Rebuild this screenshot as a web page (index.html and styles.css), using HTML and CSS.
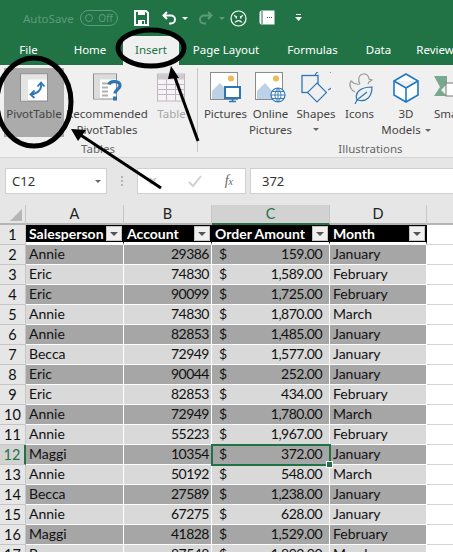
FILE: index.html
```html
<!DOCTYPE html>
<html lang="en">

<head>
  <meta name="viewport" content="width=device-width">
  <title>Insert PivotTable</title>
  <link rel="stylesheet" href="styles.css">
</head>

<body>
  <div class="titlebar">
    <span class="autosave">AutoSave</span>
    <span class="toggle"><i></i>Off</span>
    <svg class="qa qa-save" width="15" height="16" viewBox="0 0 15 16"><path d="M1 1h11l2 2v12H1z" fill="none" stroke="#fff" stroke-width="2"/><path d="M4 1h7v4H4zM4 10h7v5H4z" fill="#fff"/><path d="M8 11h2v3H8z" fill="#217346"/></svg>
    <svg class="qa qa-undo" width="15" height="14" viewBox="0 0 15 14"><path d="M5 1 1.500 4.500 5 8M2 4.500h7a4 4 0 0 1 0 8H7" fill="none" stroke="#fff" stroke-width="2"/></svg>
    <span class="caret qa-c1"></span>
    <svg class="qa qa-redo" width="15" height="14" viewBox="0 0 15 14"><path d="M10 1l3.500 3.500L10 8M13 4.500H6a4 4 0 0 0 0 8h2" fill="none" stroke="#5c9b7b" stroke-width="2"/></svg>
    <span class="caret dim qa-c2"></span>
    <svg class="qa qa-face" width="17" height="17" viewBox="0 0 17 17"><circle cx="8.500" cy="8.500" r="7.500" fill="none" stroke="#fff" stroke-width="1.200"/><path d="M4 5.500l3 1.500M13 5.500l-3 1.500M5 12.500c2-2.500 5-2.500 7 0" fill="none" stroke="#fff" stroke-width="1.200"/><path d="M5.500 7h1.500v1.500H5.500zM10 7h1.500v1.500H10z" fill="#fff"/></svg>
    <svg class="qa qa-book" width="16" height="17" viewBox="0 0 16 17"><path d="M3 .5h12.500v14H3A2.500 2.500 0 0 1 .5 12V3A2.500 2.500 0 0 1 3 .5z" fill="#fff"/><path d="M3 1v13" stroke="#217346"/><path d="M8 7h1v1H8zM10 7h1v1h-1zM12 7h1v1h-1z" fill="#217346"/></svg>
    <svg class="qa qa-more" width="7" height="8" viewBox="0 0 7 8"><path d="M1 .5h5" stroke="#fff"/><path d="M0 3h7L3.500 7z" fill="#fff"/></svg>
  </div>

  <nav class="tabs">
    <span class="tab tab-file">File</span>
    <span class="tab tab-home">Home</span>
    <span class="tab tab-insert">Insert</span>
    <span class="tab tab-layout">Page Layout</span>
    <span class="tab tab-formulas">Formulas</span>
    <span class="tab tab-data">Data</span>
    <span class="tab tab-review">Review</span>
  </nav>

  <section class="ribbon">
    <div class="group group-tables">
      <div class="items">
        <div class="btn btn-pivot active">
          <svg width="29" height="29" viewBox="0 0 29 29"><rect x=".5" y=".5" width="27" height="27" fill="#fff" stroke="#8c8c8c"/><path d="M1 1h26v5H1zM1 6h7v21H1z" fill="#e4e4e4"/><path d="M21 10c1 6-3 10-10 11" fill="none" stroke="#2e75b6" stroke-width="2"/><path d="M17.500 13l3.500-4 3.500 4M14.500 17l-4 4 4 3.500" fill="none" stroke="#2e75b6" stroke-width="1.800"/></svg>
          <span>PivotTable</span>
        </div>
        <div class="btn btn-recommended">
          <svg width="29" height="29" viewBox="0 0 29 29"><rect x=".5" y=".5" width="23" height="25" fill="#fff" stroke="#8c8c8c"/><path d="M1 1h22v5H1zM1 6h6v19H1z" fill="#dcdcdc"/><path d="M9 10h9M9 14h6M9 18h6M9 22h6" stroke="#b0b0b0" stroke-width="2"/><path d="M16 11c1-4 11-4 11 1 0 4-5 4-5 8" fill="none" stroke="#2e75b6" stroke-width="3.200"/><rect x="20" y="23" width="4" height="4" fill="#2e75b6"/></svg>
          <span>Recommended<br>PivotTables</span>
        </div>
        <div class="btn btn-table disabled">
          <svg width="29" height="29" viewBox="0 0 29 29"><rect x=".5" y=".5" width="27" height="27" fill="#f6f2f6" stroke="#bdb8bd"/><rect x="1" y="1" width="26" height="5" fill="#cfcacf"/><path d="M1 11h26M1 16h26M1 21h26M9.500 6v21M18.500 6v21" stroke="#bdb8bd"/></svg>
          <span>Table</span>
        </div>
      </div>
      <div class="label">Tables</div>
    </div>

    <div class="group group-illustrations">
      <div class="items">
        <div class="btn btn-pictures">
          <svg width="32" height="32" viewBox="0 0 32 32"><rect x=".5" y=".5" width="27" height="27" fill="#fff" stroke="#8c8c8c"/><circle cx="21" cy="6.500" r="3" fill="#f0b955"/><path d="M2 27V19l8-8 8 9v7z" fill="#bcd0e6"/><rect x="15" y="15" width="15" height="11" fill="#fff" stroke="#2e75b6" stroke-width="2"/><path d="M22.500 26v3M19 29.500h7" stroke="#2e75b6" stroke-width="1.500"/></svg>
          <span>Pictures</span>
        </div>
        <div class="btn btn-online">
          <svg width="32" height="32" viewBox="0 0 32 32"><rect x=".5" y=".5" width="27" height="27" fill="#fff" stroke="#8c8c8c"/><circle cx="21" cy="6.500" r="3" fill="#f0b955"/><path d="M2 27V19l8-8 8 9v7z" fill="#bcd0e6"/><circle cx="23" cy="23" r="7" fill="#fff" stroke="#2e75b6" stroke-width="1.200"/><path d="M16 23h14M17 19.500h12M17 26.500h12M23 16v14M23 16c-4 4-4 10 0 14M23 16c4 4 4 10 0 14" fill="none" stroke="#2e75b6" stroke-width=".9"/></svg>
          <span>Online<br>Pictures</span>
        </div>
        <div class="btn btn-shapes">
          <svg width="30" height="32" viewBox="0 0 30 32"><path d="M14 3a10.500 10.500 0 1 1 13 15" fill="none" stroke="#2e75b6" stroke-width="1.100"/><rect x="1" y="3.500" width="16" height="17" fill="none" stroke="#2e75b6" stroke-width="1.300"/><path d="M16 11l9.500 9.500-9.500 9.500-9.500-9.500z" fill="#f0f0f0" stroke="#2e75b6" stroke-width="1.100"/></svg>
          <span>Shapes</span>
          <i class="caret gray"></i>
        </div>
        <div class="btn btn-icons">
          <svg width="30" height="32" viewBox="0 0 30 32"><path d="M15 12c-4 1-6 0-9-3-3 5 1 10 4 11M15 12c-2-3-2-9 3-10 4-1 6 3 6 5l3 1-3 2-1 2" fill="none" stroke="#9b9b9b" stroke-width="1.200"/><path d="M10 32l2-4M12 28c-3-8 4-13 15-13 0 9-5 16-15 13zM12 28l10-8" fill="none" stroke="#2e75b6" stroke-width="1.200"/></svg>
          <span>Icons</span>
        </div>
        <div class="btn btn-models">
          <svg width="30" height="32" viewBox="0 0 30 32"><path d="M15 2l12 7v14l-12 7-12-7V9zM3 9l12 7 12-7M15 16v14" fill="#fff" stroke="#1f78c8" stroke-width="1.600"/></svg>
          <span>3D<br>Models <i class="caret gray inline"></i></span>
        </div>
        <div class="btn btn-smart">
          <svg width="26" height="32" viewBox="0 0 26 32"><path d="M0 4h13v8l-6 6 6 6H0l6-9z" fill="#79a890"/><rect x="12" y="11" width="14" height="13" fill="#fff" stroke="#777"/></svg>
          <span>Sma</span>
        </div>
      </div>
      <div class="label">Illustrations</div>
    </div>
  </section>

  <div class="formulabar">
    <div class="namebox">C12<i class="caret gray"></i></div>
    <div class="grip"></div>
    <div class="fxbox">
      <svg width="16" height="14" viewBox="0 0 16 14"><path d="M1 1l6 6M7 1L1 7" stroke="#d0d0d0" stroke-width="2" transform="translate(0 3)"/></svg>
      <svg width="16" height="14" viewBox="0 0 16 14"><path d="M2 8l4 4 8-10" fill="none" stroke="#d0d0d0" stroke-width="2"/></svg>
      <span class="fx">f<small>x</small></span>
    </div>
    <div class="input">372</div>
  </div>

  <table class="sheet">
    <colgroup>
      <col class="c-row"><col class="c-a"><col class="c-b"><col class="c-c"><col class="c-d"><col class="c-e">
    </colgroup>
    <tr class="heads">
      <th class="corner"><span></span></th><th>A</th><th>B</th><th class="current">C</th><th>D</th><th class="rest"></th>
    </tr>
    <tr class="titles">
      <th>1</th>
      <td>Salesperson<i class="filter"></i></td>
      <td>Account<i class="filter"></i></td>
      <td>Order Amount<i class="filter"></i></td>
      <td>Month<i class="filter"></i></td>
      <td class="rest"></td>
    </tr>
    <tr class="dark"><th>2</th><td>Annie</td><td class="num">29386</td><td class="money"><b>$</b>159.00</td><td>January</td><td class="rest"></td></tr>
    <tr class="light"><th>3</th><td>Eric</td><td class="num">74830</td><td class="money"><b>$</b>1,589.00</td><td>February</td><td class="rest"></td></tr>
    <tr class="dark"><th>4</th><td>Eric</td><td class="num">90099</td><td class="money"><b>$</b>1,725.00</td><td>February</td><td class="rest"></td></tr>
    <tr class="light"><th>5</th><td>Annie</td><td class="num">74830</td><td class="money"><b>$</b>1,870.00</td><td>March</td><td class="rest"></td></tr>
    <tr class="dark"><th>6</th><td>Annie</td><td class="num">82853</td><td class="money"><b>$</b>1,485.00</td><td>January</td><td class="rest"></td></tr>
    <tr class="light"><th>7</th><td>Becca</td><td class="num">72949</td><td class="money"><b>$</b>1,577.00</td><td>January</td><td class="rest"></td></tr>
    <tr class="dark"><th>8</th><td>Eric</td><td class="num">90044</td><td class="money"><b>$</b>252.00</td><td>January</td><td class="rest"></td></tr>
    <tr class="light"><th>9</th><td>Eric</td><td class="num">82853</td><td class="money"><b>$</b>434.00</td><td>February</td><td class="rest"></td></tr>
    <tr class="dark"><th>10</th><td>Annie</td><td class="num">72949</td><td class="money"><b>$</b>1,780.00</td><td>March</td><td class="rest"></td></tr>
    <tr class="light"><th>11</th><td>Annie</td><td class="num">55223</td><td class="money"><b>$</b>1,967.00</td><td>February</td><td class="rest"></td></tr>
    <tr class="dark"><th class="current">12</th><td>Maggi</td><td class="num">10354</td><td class="money selected"><b>$</b>372.00<i class="handle"></i></td><td>January</td><td class="rest"></td></tr>
    <tr class="light"><th>13</th><td>Annie</td><td class="num">50192</td><td class="money"><b>$</b>548.00</td><td>March</td><td class="rest"></td></tr>
    <tr class="dark"><th>14</th><td>Becca</td><td class="num">27589</td><td class="money"><b>$</b>1,238.00</td><td>January</td><td class="rest"></td></tr>
    <tr class="light"><th>15</th><td>Annie</td><td class="num">67275</td><td class="money"><b>$</b>628.00</td><td>January</td><td class="rest"></td></tr>
    <tr class="dark"><th>16</th><td>Maggi</td><td class="num">41828</td><td class="money"><b>$</b>1,529.00</td><td>February</td><td class="rest"></td></tr>
    <tr class="light"><th>17</th><td>Becca</td><td class="num">87548</td><td class="money"><b>$</b>1,892.00</td><td>March</td><td class="rest"></td></tr>
  </table>

  <!-- hand drawn marks on top of the screenshot -->
  <svg class="marks" width="453" height="552" viewBox="0 0 453 552">
    <g fill="none" stroke="#000">
      <ellipse cx="151" cy="48" rx="33" ry="18" stroke-width="5"/>
      <ellipse cx="34" cy="102" rx="37" ry="44" stroke-width="5"/>
      <path d="M198 141 173 72" stroke-width="3"/>
      <path d="M161 188 76 132" stroke-width="3"/>
    </g>
    <path d="M171 66l8 12-11 1z" fill="#000"/>
    <path d="M71 129l15 1-8 11z" fill="#000"/>
  </svg>
</body>

</html>
```

FILE: styles.css
```css
html, body {
  margin: 0;
  padding: 0;
}

body {
  width: 453px;
  height: 552px;
  overflow: hidden;
  position: relative;
  background: #fff;
  font-family: "Noto Sans", sans-serif;
  font-size: 12px;
  color: #444;
}

.titlebar {
  display: flex;
  align-items: center;
  height: 36px;
  padding-left: 23px;
  background: #217346;
}

.autosave {
  width: 57px;
  color: #5c9b7b;
  font-size: 11.500px;
}

.toggle {
  display: flex;
  align-items: center;
  justify-content: space-between;
  box-sizing: border-box;
  width: 38px;
  height: 16px;
  padding: 0 4px;
  border: 1px solid #5c9b7b;
  border-radius: 8px;
  color: #5c9b7b;
  font-size: 10px;
}

.toggle i {
  width: 6px;
  height: 6px;
  border: 1px solid #5c9b7b;
  border-radius: 50%;
}

.qa { flex: none; }
.qa-save { margin-left: 16px; }
.qa-undo { margin-left: 13px; }
.qa-c1 { margin-left: 5px; }
.qa-redo { margin-left: 10px; }
.qa-c2 { margin-left: 6px; }
.qa-face { margin-left: 5px; }
.qa-book { margin-left: 12px; }
.qa-more { margin-left: 20px; }

.caret {
  display: inline-block;
  width: 0;
  height: 0;
  border-left: 3px solid transparent;
  border-right: 3px solid transparent;
  border-top: 3px solid #fff;
}

.caret.dim { border-top-color: #5c9b7b; }
.caret.gray { border-top-color: #666; }
.caret.inline { vertical-align: middle; margin-left: 1px; }

.tabs {
  display: flex;
  height: 29px;
  background: #217346;
  overflow: hidden;
}

.tab {
  flex: none;
  height: 29px;
  line-height: 28px;
  text-align: center;
  color: #fff;
  font-size: 11.500px;
  white-space: nowrap;
}

.tab-file { width: 57px; }
.tab-home { width: 66px; }
.tab-insert { width: 56px; color: #217346; background: #f0f0f0; }
.tab-layout { width: 94px; }
.tab-formulas { width: 79px; }
.tab-data { width: 53px; }
.tab-review { width: 60px; }

.ribbon {
  display: flex;
  box-sizing: border-box;
  height: 93px;
  padding-top: 3px;
  background: #f0f0f0;
  border-bottom: 1px solid #d4d4d4;
}

.group {
  display: flex;
  flex-direction: column;
  flex: none;
}

.group-tables {
  width: 198px;
  padding-left: 4px;
  box-sizing: border-box;
  background: linear-gradient(#c6c6c6, #c6c6c6) right top / 1px 84px no-repeat;
}

.group-illustrations {
  padding-left: 6px;
  width: 255px;
  box-sizing: border-box;
}

.items {
  display: flex;
  height: 73px;
}

.btn {
  flex: none;
  display: flex;
  flex-direction: column;
  align-items: center;
  box-sizing: border-box;
  padding-top: 4px;
  height: 69px;
  line-height: 16px;
  text-align: center;
  white-space: nowrap;
  font-size: 11.500px;
}

.btn svg {
  flex: none;
  height: 32px;
  margin-bottom: 2px;
}

.btn .caret.gray { margin-top: 6px; }
.btn .caret.inline { margin-top: 0; }

.btn-pivot { width: 60px; }
.btn-recommended { width: 86px; }
.btn-table { width: 43px; }
.btn-pictures { width: 43px; }
.btn-online { width: 47px; }
.btn-shapes { width: 44px; }
.btn-icons { width: 43px; }
.btn-models { width: 50px; }
.btn-smart { width: 30px; align-items: flex-start; padding-left: 3px; }

.active { background: #ababab; }
.disabled { color: #a6a6a6; }

.label {
  text-align: center;
  color: #666;
  font-size: 11.500px;
  line-height: 16px;
}

.group-tables .label { padding-right: 6px; }
.group-illustrations .label { padding-left: 84px; }

.formulabar {
  display: flex;
  box-sizing: border-box;
  height: 47px;
  padding: 10px 0 0 5px;
  background: #e6e6e6;
  font-size: 13px;
}

.namebox,
.fxbox,
.input {
  display: flex;
  align-items: center;
  box-sizing: border-box;
  height: 26px;
  background: #fff;
  border: 1px solid #d0d0d0;
}

.namebox {
  justify-content: space-between;
  width: 102px;
  padding: 0 5px 0 6px;
  color: #333;
}

.grip {
  width: 2px;
  height: 10px;
  margin: 8px 14px 0 14px;
  border-left: 2px dotted #b5b5b5;
  box-sizing: border-box;
}

.fxbox {
  justify-content: space-between;
  width: 109px;
  padding: 0 12px 0 11px;
}

.fx {
  font-family: "Liberation Serif", serif;
  font-style: italic;
  font-size: 14px;
  color: #666;
}

.fx small { font-size: 10px; }

.input {
  flex: 1;
  margin-left: 4px;
  padding-left: 11px;
  border-right: none;
  color: #333;
}

.sheet {
  table-layout: fixed;
  border-collapse: separate;
  border-spacing: 0;
  width: 453px;
  font-family: Lato, sans-serif;
  font-size: 14px;
  color: #111;
}

.c-row { width: 26px; }
.c-a { width: 98px; }
.c-b { width: 88px; }
.c-c { width: 118px; }
.c-d { width: 97px; }

.sheet tr { height: 20px; }

.sheet th,
.sheet td {
  box-sizing: border-box;
  height: 20px;
  padding: 0 2px 2px 3px;
  overflow: hidden;
  white-space: nowrap;
  position: relative;
  border-right: 1px solid #fff;
  border-bottom: 1px solid #fff;
  line-height: 17px;
}

.sheet th {
  background: #e6e6e6;
  font-weight: normal;
  font-size: 14.500px;
  text-align: center;
  padding: 0;
  border-right: 1px solid #c6c6c6;
  border-bottom: 1px solid #c6c6c6;
  line-height: 19px;
}

.heads th {
  color: #222;
  border-bottom: 2px solid #b5b5b5;
  line-height: 18px;
}

.heads .current {
  background: #d2d2d2;
  color: #217346;
  border-bottom: 2px solid #217346;
}

.heads .rest { border-right: none; }

.corner span {
  position: absolute;
  right: 3px;
  bottom: 2px;
  width: 0;
  height: 0;
  border-left: 12px solid transparent;
  border-bottom: 12px solid #b5b5b5;
}

.sheet th.current:not(.corner) { background: #d2d2d2; color: #217346; }
.dark th.current { border-right: 2px solid #217346; }

.sheet .titles td {
  background: #000;
  color: #fff;
  font-weight: bold;
  padding-bottom: 0;
  border-right: 1px solid #000;
  border-bottom: 3px solid #fff;
  line-height: 17px;
}

.sheet .titles td.rest { background: #fff; border-right: none; border-bottom: 1px solid #d4d4d4; }

.filter {
  position: absolute;
  right: 1px;
  top: 1px;
  width: 16px;
  height: 15px;
  box-sizing: border-box;
  background: #f0f0f0;
  border: 1px solid #c4c4c4;
}

.filter::after {
  content: "";
  position: absolute;
  left: 3px;
  top: 5px;
  border-left: 4px solid transparent;
  border-right: 4px solid transparent;
  border-top: 4px solid #555;
}

.dark td { background: #a6a6a6; }
.light td { background: #d9d9d9; }

.sheet td.rest {
  background: #fff;
  border-right: none;
  border-bottom: 1px solid #d4d4d4;
}

.num,
.money { letter-spacing: -.5px; }

.num { text-align: right; }
.sheet td.money { text-align: right; padding-right: 7px; }
.money b {
  float: left;
  font-weight: normal;
  padding-left: 4px;
}

.sheet td.selected {
  overflow: visible;
  outline: 2px solid #217346;
  outline-offset: -1px;
  z-index: 1;
}

.handle {
  position: absolute;
  right: -4px;
  bottom: -4px;
  width: 5px;
  height: 5px;
  background: #217346;
  border: 1px solid #fff;
}

.marks {
  position: absolute;
  left: 0;
  top: 0;
}
```
